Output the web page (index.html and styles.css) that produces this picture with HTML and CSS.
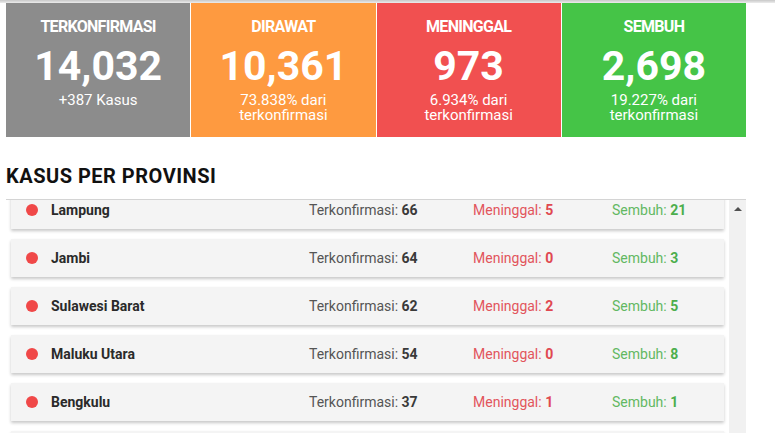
FILE: index.html
```html
<!DOCTYPE html>
<html lang="id">
<head>
<meta charset="utf-8">
<title>Kasus</title>
<link rel="stylesheet" href="styles.css">
</head>
<body>
<div class="topshade"></div>
<main class="page">
  <section class="stats">
    <div class="stat stat-gray">
      <div class="stat-title">TERKONFIRMASI</div>
      <div class="stat-num">14,032</div>
      <div class="stat-sub">+387 Kasus</div>
    </div>
    <div class="stat stat-orange">
      <div class="stat-title">DIRAWAT</div>
      <div class="stat-num">10,361</div>
      <div class="stat-sub">73.838% dari<br>terkonfirmasi</div>
    </div>
    <div class="stat stat-red">
      <div class="stat-title">MENINGGAL</div>
      <div class="stat-num">973</div>
      <div class="stat-sub">6.934% dari<br>terkonfirmasi</div>
    </div>
    <div class="stat stat-green">
      <div class="stat-title">SEMBUH</div>
      <div class="stat-num">2,698</div>
      <div class="stat-sub">19.227% dari<br>terkonfirmasi</div>
    </div>
  </section>

  <h2 class="heading">KASUS PER PROVINSI</h2>

  <section class="scroller">
    <div class="list">
      <div class="row first">
        <span class="dot"></span>
        <span class="name">Lampung</span>
        <span class="conf">Terkonfirmasi: <b>66</b></span>
        <span class="dead">Meninggal: <b>5</b></span>
        <span class="heal">Sembuh: <b>21</b></span>
      </div>
      <div class="row">
        <span class="dot"></span>
        <span class="name">Jambi</span>
        <span class="conf">Terkonfirmasi: <b>64</b></span>
        <span class="dead">Meninggal: <b>0</b></span>
        <span class="heal">Sembuh: <b>3</b></span>
      </div>
      <div class="row">
        <span class="dot"></span>
        <span class="name">Sulawesi Barat</span>
        <span class="conf">Terkonfirmasi: <b>62</b></span>
        <span class="dead">Meninggal: <b>2</b></span>
        <span class="heal">Sembuh: <b>5</b></span>
      </div>
      <div class="row">
        <span class="dot"></span>
        <span class="name">Maluku Utara</span>
        <span class="conf">Terkonfirmasi: <b>54</b></span>
        <span class="dead">Meninggal: <b>0</b></span>
        <span class="heal">Sembuh: <b>8</b></span>
      </div>
      <div class="row">
        <span class="dot"></span>
        <span class="name">Bengkulu</span>
        <span class="conf">Terkonfirmasi: <b>37</b></span>
        <span class="dead">Meninggal: <b>1</b></span>
        <span class="heal">Sembuh: <b>1</b></span>
      </div>
      <div class="row row-empty"></div>
    </div>
    <div class="scrollbar">
      <span class="arrow-up"></span>
    </div>
  </section>
</main>
</body>
</html>
```
FILE: styles.css
```css
* { box-sizing: border-box; }
html, body {
  margin: 0;
  height: 433px;
  overflow: hidden;
  background: #fff;
  font-family: Roboto, "Liberation Sans", Arial, sans-serif;
}
.topshade {
  height: 3px;
  background: linear-gradient(#c8c8c8, #ececec);
}
.page {
  padding: 0 29px 0 6px;
}
.stats {
  display: grid;
  grid-template-columns: repeat(4, 1fr);
  gap: 1px;
  height: 134px;
}
.stat {
  color: #fff;
  text-align: center;
  padding-top: 14px;
}
.stat-gray { background: #8c8c8c; }
.stat-orange { background: #fe9a40; }
.stat-red { background: #f15050; }
.stat-green { background: #45c447; }
.stat-title {
  font-size: 16px;
  line-height: 20px;
  font-weight: 700;
  letter-spacing: -0.7px;
}
.stat-num {
  font-size: 41px;
  line-height: 48px;
  font-weight: 700;
  margin-top: 5px;
}
.stat-sub {
  font-size: 15px;
  line-height: 15px;
  margin-top: 3px;
}
.heading {
  margin: 27px 0 11px;
  font-size: 20px;
  line-height: 24px;
  font-weight: 700;
  color: #111;
  letter-spacing: 0.5px;
}
.scroller {
  display: flex;
  height: 240px;
  border-top: 1px solid #d4d4d4;
  overflow: hidden;
}
.list {
  flex: 1;
  padding: 0 5px;
  overflow: hidden;
}
.row {
  display: grid;
  grid-template-columns: 25px 258px 164px 139px 1fr;
  align-items: center;
  height: 38px;
  margin-bottom: 10px;
  padding-left: 15px;
  background: #f4f4f4;
  box-shadow: 0 2px 3px rgba(0, 0, 0, 0.22);
  font-size: 14px;
}
.row.first { margin-top: -9px; }
.dot {
  width: 12px;
  height: 12px;
  border-radius: 50%;
  background: #f04848;
}
.name { font-weight: 700; color: #2a2a2a; }
.conf { color: #555; }
.conf b { color: #3a3a3a; }
.dead { color: #e2555c; }
.dead b { color: #e04850; }
.heal { color: #62b862; }
.heal b { color: #4cae4c; }
.scrollbar {
  width: 17px;
  flex: none;
  background: #f1f1f1;
  display: flex;
  justify-content: center;
  padding-top: 7px;
}
.arrow-up {
  width: 0;
  height: 0;
  border-left: 4px solid transparent;
  border-right: 4px solid transparent;
  border-bottom: 4px solid #505050;
}
```
